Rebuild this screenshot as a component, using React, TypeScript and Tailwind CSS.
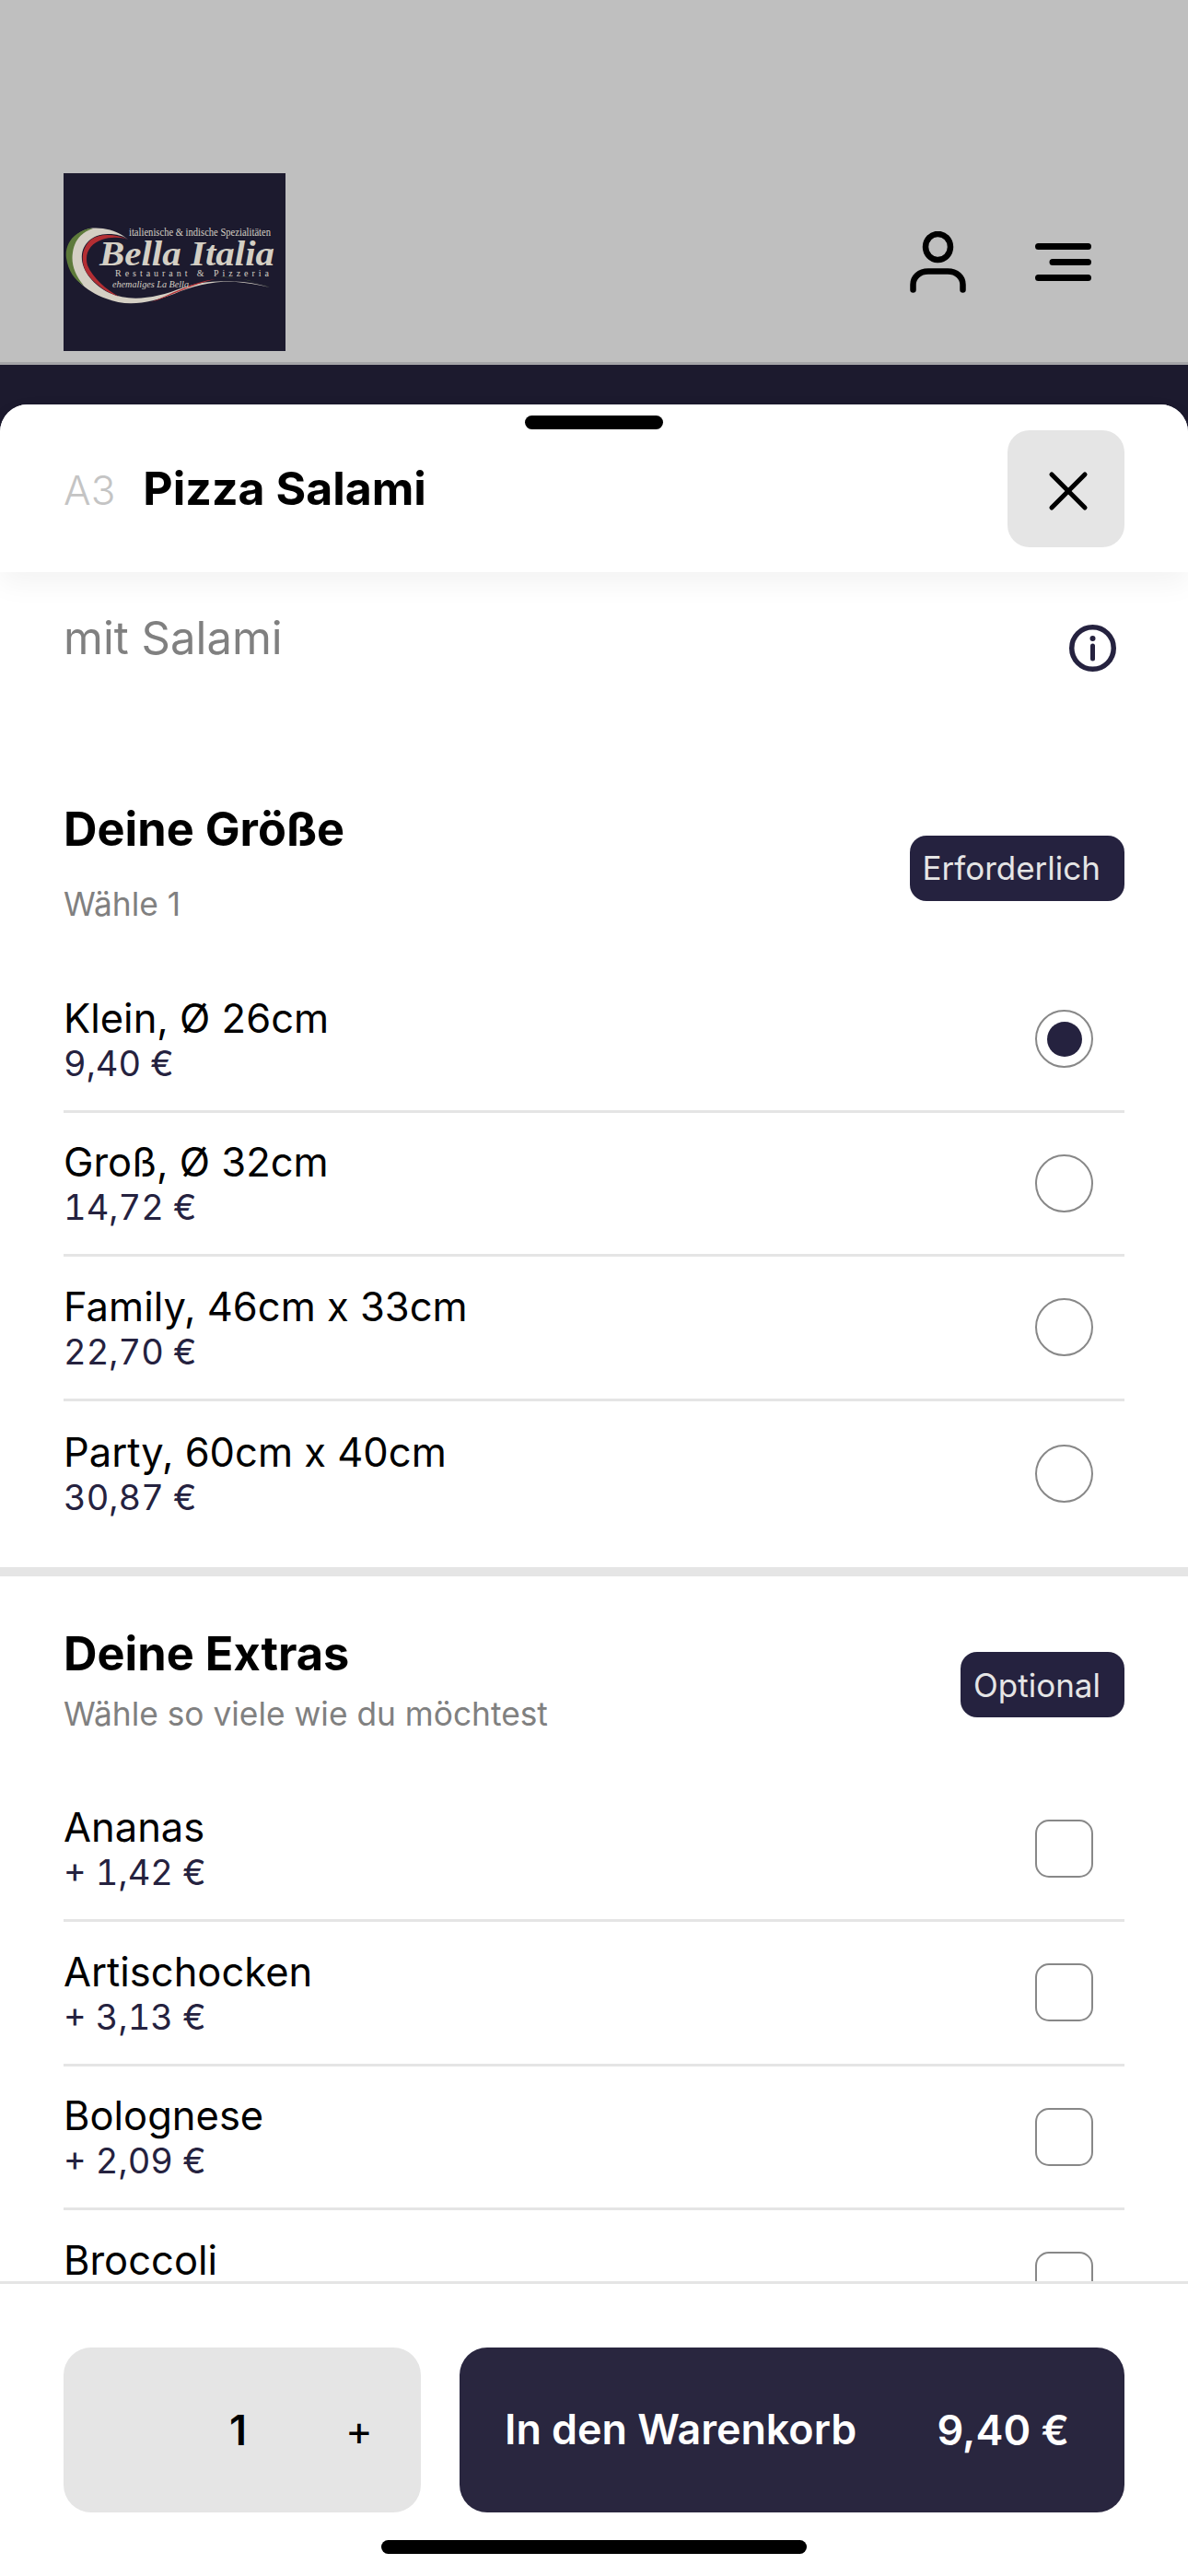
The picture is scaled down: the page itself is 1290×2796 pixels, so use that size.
import { X } from 'lucide-react';

const sizes = [
  { name: 'Klein, Ø 26cm', price: '9,40 €', selected: true },
  { name: 'Groß, Ø 32cm', price: '14,72 €' },
  { name: 'Family, 46cm x 33cm', price: '22,70 €' },
  { name: 'Party, 60cm x 40cm', price: '30,87 €' },
];

const extras = [
  { name: 'Ananas', price: '+ 1,42 €' },
  { name: 'Artischocken', price: '+ 3,13 €' },
  { name: 'Bolognese', price: '+ 2,09 €' },
  { name: 'Broccoli', price: '+ 1,42 €' },
];

function Logo() {
  return (
    <svg viewBox="0 0 241 193" className="h-[193px] w-[241px]">
      <rect width="241" height="193" fill="#1c1a2e" />
      {/* swoosh */}
      <path d="M71 73 C60 62 42 58 28 60 C12 64 5 76 5 90 C5 112 24 128 46 136 C70 146 96 140 120 131 C150 118 185 112 224 124 C190 116 160 114 130 124 C100 136 72 140 50 130 C32 122 18 104 20 88 C22 74 34 66 48 66 C58 66 66 68 71 73 Z" fill="#d4cfc4" />
      <path d="M28 60 C10 64 1 78 3 92 C5 106 12 116 22 122 C12 110 8 98 10 86 C12 72 20 64 32 60 Z" fill="#5d7a3a" />
      <path d="M70 72 C56 66 40 65 30 72 C18 82 18 100 28 112 C36 122 48 130 60 134 C46 126 32 114 26 100 C22 86 30 76 42 72 C50 69 62 69 70 72 Z" fill="#b32e33" />
      <path d="M95 140 C115 134 140 120 165 115 C140 118 115 132 95 140 Z" fill="#b32e33" />
      <path d="M170 113 C190 112 210 118 224 124 C205 116 186 112 170 113 Z" fill="#5d7a3a" />
      <text x="71" y="68" fontSize="11.5" fill="#d4cfc4" fontFamily="'Liberation Serif', serif" textLength="154" lengthAdjust="spacingAndGlyphs">italienische &amp; indische Spezialitäten</text>
      <text x="39" y="100" fontSize="38" fontStyle="italic" fontWeight="700" fill="#d4cfc4" fontFamily="'Liberation Serif', serif" textLength="190" lengthAdjust="spacingAndGlyphs">Bella Italia</text>
      <text x="56" y="112" fontSize="10" fill="#d4cfc4" fontFamily="'Liberation Serif', serif" textLength="167">Restaurant &amp; Pizzeria</text>
      <text x="53" y="124" fontSize="9.5" fontStyle="italic" fill="#d4cfc4" fontFamily="'Liberation Serif', serif" textLength="83" lengthAdjust="spacingAndGlyphs">ehemaliges La Bella</text>
    </svg>
  );
}

function UserIcon() {
  return (
    <svg viewBox="0 0 61 67" fill="none" stroke="#000" strokeWidth="6.5" strokeLinecap="round" className="h-[67px] w-[61px]">
      <ellipse cx="30.5" cy="17" rx="13.5" ry="14" />
      <path d="M3.5 63.5 V58 C3.5 50 10 43.5 20 43.5 H41 C51 43.5 57.5 50 57.5 58 V63.5" />
    </svg>
  );
}

function MenuIcon() {
  return (
    <svg viewBox="0 0 61 41" fill="none" stroke="#000" strokeWidth="7" strokeLinecap="round" className="h-[41px] w-[61px]">
      <path d="M3.5 3.5 H57.5 M19 20.5 H57.5 M3.5 37.5 H57.5" />
    </svg>
  );
}

function InfoIcon() {
  return (
    <svg viewBox="0 0 51 51" fill="none" className="h-[51px] w-[51px]">
      <circle cx="25.5" cy="25.5" r="22.75" stroke="#25223f" strokeWidth="5.5" />
      <path d="M25.5 23 V37" stroke="#25223f" strokeWidth="5" strokeLinecap="round" />
      <circle cx="25.5" cy="15" r="3" fill="#25223f" />
    </svg>
  );
}

function Row({ name, price, control, last }: { name: string; price: string; control: React.ReactNode; last?: boolean }) {
  return (
    <div className={last ? 'flex h-[156.6px] items-center justify-between' : 'flex h-[156.6px] items-center justify-between border-b-[3px] border-[#e5e5e5]'}>
      <div className="flex flex-col">
        <span className="text-[43.5px] leading-[52px] text-black">{name}</span>
        <span className="text-[38px] leading-[46px] tabular-nums text-[#25223f]">{price}</span>
      </div>
      <div className="mr-[34px]">{control}</div>
    </div>
  );
}

function Radio({ selected }: { selected?: boolean }) {
  return (
    <div className="flex h-[63px] w-[63px] items-center justify-center rounded-full border-2 border-[#888888]">
      {selected && <div className="h-[38px] w-[38px] rounded-full bg-[#25223f]" />}
    </div>
  );
}

function Checkbox() {
  return <div className="h-[63px] w-[63px] rounded-[15px] border-2 border-[#888888]" />;
}

function Badge({ label }: { label: string }) {
  return (
    <div className="flex h-[71px] items-center rounded-[18px] bg-[#25223f] pl-[14px] pr-[26px] text-[35px] text-[#e5e5e5]">
      {label}
    </div>
  );
}

export default function App() {
  return (
    <div className="flex h-[2796px] w-[1290px] flex-col overflow-hidden bg-[#1c1a2e] font-['Inter',sans-serif]">
      {/* dimmed page behind the sheet */}
      <header className="flex h-[396px] shrink-0 items-end border-b-[3px] border-[#a5a5a8] bg-[#bfbfbf] pb-[12px] pl-[69px] pr-[105px]">
        <div className="flex w-full items-center justify-between">
          <Logo />
          <div className="flex items-center gap-[75px]">
            <UserIcon />
            <MenuIcon />
          </div>
        </div>
      </header>

      <div className="relative mt-[43px] flex min-h-0 flex-1 flex-col rounded-t-[30px] bg-white">
        <div className="absolute left-[570px] top-[12px] z-20 h-[15px] w-[150px] rounded-full bg-black" />

        <div className="relative z-10 flex h-[182px] shrink-0 items-center justify-between rounded-t-[30px] bg-white pl-[69px] pr-[69px] shadow-[0_12px_30px_rgba(0,0,0,0.05)]">
          <div className="flex items-baseline gap-[30px]">
            <span className="text-[44px] font-light text-[#c4c4c4]">A3</span>
            <span className="text-[50px] font-bold text-black">Pizza Salami</span>
          </div>
          <button className="mt-[1px] flex h-[127px] w-[127px] items-center justify-center rounded-[24px] bg-[#e5e5e5]">
            <X size={72} strokeWidth={1.7} color="#000" className="ml-[4px] mt-[4px]" />
          </button>
        </div>

        <div className="min-h-0 flex-1 overflow-hidden">
          <div className="flex items-start justify-between pl-[69px] pr-[78px] pt-[43px]">
            <span className="text-[49px] leading-[58px] text-[#808080]">mit Salami</span>
            <div className="mt-[14px]"><InfoIcon /></div>
          </div>

          {/* size group */}
          <section className="px-[69px] pt-[141px]">
            <div className="flex items-start justify-between">
              <div>
                <h2 className="text-[50.5px] font-bold leading-[60px] text-black">Deine Größe</h2>
                <p className="mt-[32px] text-[35.3px] leading-[40px] text-[#808080]">Wähle 1</p>
              </div>
              <div className="mt-[37px]"><Badge label="Erforderlich" /></div>
            </div>
            <div className="mt-[49px]">
              {sizes.map((s, i) => (
                <div key={s.name}>
                  <Row name={s.name} price={s.price} last={i === sizes.length - 1} control={<Radio selected={s.selected} />} />
                </div>
              ))}
            </div>
          </section>

          <div className="mt-[24px] h-[10px] bg-[#e5e5e5]" />

          {/* extras group */}
          <section className="px-[69px] pt-[54px]">
            <div className="flex items-start justify-between">
              <div>
                <h2 className="text-[50.5px] font-bold leading-[60px] text-black">Deine Extras</h2>
                <p className="mt-[16px] text-[35.3px] leading-[40px] text-[#808080]">Wähle so viele wie du möchtest</p>
              </div>
              <div className="mt-[28px]"><Badge label="Optional" /></div>
            </div>
            <div className="mt-[48px]">
              {extras.map((e) => (
                <div key={e.name}>
                  <Row name={e.name} price={e.price} control={<Checkbox />} />
                </div>
              ))}
            </div>
          </section>
        </div>

        {/* footer */}
        <footer className="relative h-[320px] shrink-0 border-t-[3px] border-[#e5e5e5] bg-white px-[69px] pt-[69px]">
          <div className="flex gap-[42px]">
            <div className="flex h-[179px] w-[388px] items-center rounded-[30px] bg-[#e5e5e5]">
              <span className="ml-[180px] text-[45px] font-semibold text-black">1</span>
              <span className="ml-[107px] text-[45px] text-black">+</span>
            </div>
            <button className="flex h-[179px] flex-1 items-center justify-between rounded-[30px] bg-[#29263f] pl-[49px] pr-[60px] text-[45px] font-semibold text-white">
              <span className="text-[44.8px]">In den Warenkorb</span>
              <span>9,40 €</span>
            </button>
          </div>
          <div className="absolute bottom-[24px] left-[414px] h-[15px] w-[462px] rounded-full bg-black" />
        </footer>
      </div>
    </div>
  );
}
